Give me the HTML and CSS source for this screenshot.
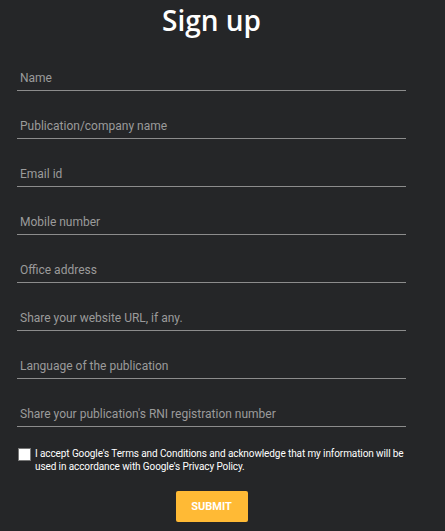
FILE: index.html
```html
<!DOCTYPE html>
<html lang="en">
<head>
    <meta charset="UTF-8">
    <meta name="viewport" content="width=device-width, initial-scale=1.0">
    <title>Sign up</title>
    <link rel="stylesheet" href="styles.css">
</head>
<body>
    <div class="signup">
        <h1>Sign up</h1>

        <form class="fields" onsubmit="return false;">
            <input type="text" placeholder="Name">
            <input type="text" placeholder="Publication/company name">
            <input type="email" placeholder="Email id">
            <input type="tel" placeholder="Mobile number">
            <input type="text" placeholder="Office address">
            <input type="url" placeholder="Share your website URL, if any.">
            <input type="text" placeholder="Language of the publication">
            <input type="text" placeholder="Share your publication's RNI registration number">

            <label class="terms">
                <input type="checkbox">
                <span>I accept Google's Terms and Conditions and acknowledge that my information will be used in accordance with Google's Privacy Policy.</span>
            </label>

            <div class="actions">
                <button type="submit">SUBMIT</button>
            </div>
        </form>
    </div>
</body>
</html>
```

FILE: styles.css
```css
body {
    margin: 0;
    background-color: #252628;
    font-family: Roboto, Arial, sans-serif;
}
.signup {
    width: 389px;
    margin-left: 17px;
}
.signup h1 {
    margin: 0;
    height: 43px;
    line-height: 40px;
    font-family: "Open Sans", sans-serif;
    font-weight: 600;
    font-size: 28px;
    color: #fff;
    text-align: center;
}
.fields input[type="text"],
.fields input[type="email"],
.fields input[type="tel"],
.fields input[type="url"] {
    display: block;
    box-sizing: border-box;
    width: 100%;
    height: 30px;
    margin: 18px 0 0;
    padding: 4px 3px 0;
    border: none;
    border-bottom: 1px solid #8c8c8c;
    background: transparent;
    font-family: Roboto, sans-serif;
    font-size: 12px;
    color: #ddd;
    outline: none;
}
.fields input::placeholder {
    color: #9b9b9b;
}
.terms {
    display: flex;
    align-items: flex-start;
    margin-top: 20px;
    font-family: Roboto, sans-serif;
    font-size: 10px;
    letter-spacing: -0.1px;
    line-height: 13px;
    color: #fff;
}
.terms input {
    appearance: none;
    flex: none;
    width: 13px;
    height: 13px;
    margin: 1px 4px 0 1px;
    background: #fff;
    border: 1px solid #777;
    box-sizing: border-box;
}
.actions {
    display: flex;
    justify-content: center;
    margin-top: 18px;
}
.actions button {
    width: 72px;
    height: 31px;
    border: none;
    border-radius: 2px;
    background-color: #ffba35;
    color: #fff;
    font-family: Roboto, sans-serif;
    font-weight: 700;
    font-size: 11px;
    cursor: pointer;
}
```
